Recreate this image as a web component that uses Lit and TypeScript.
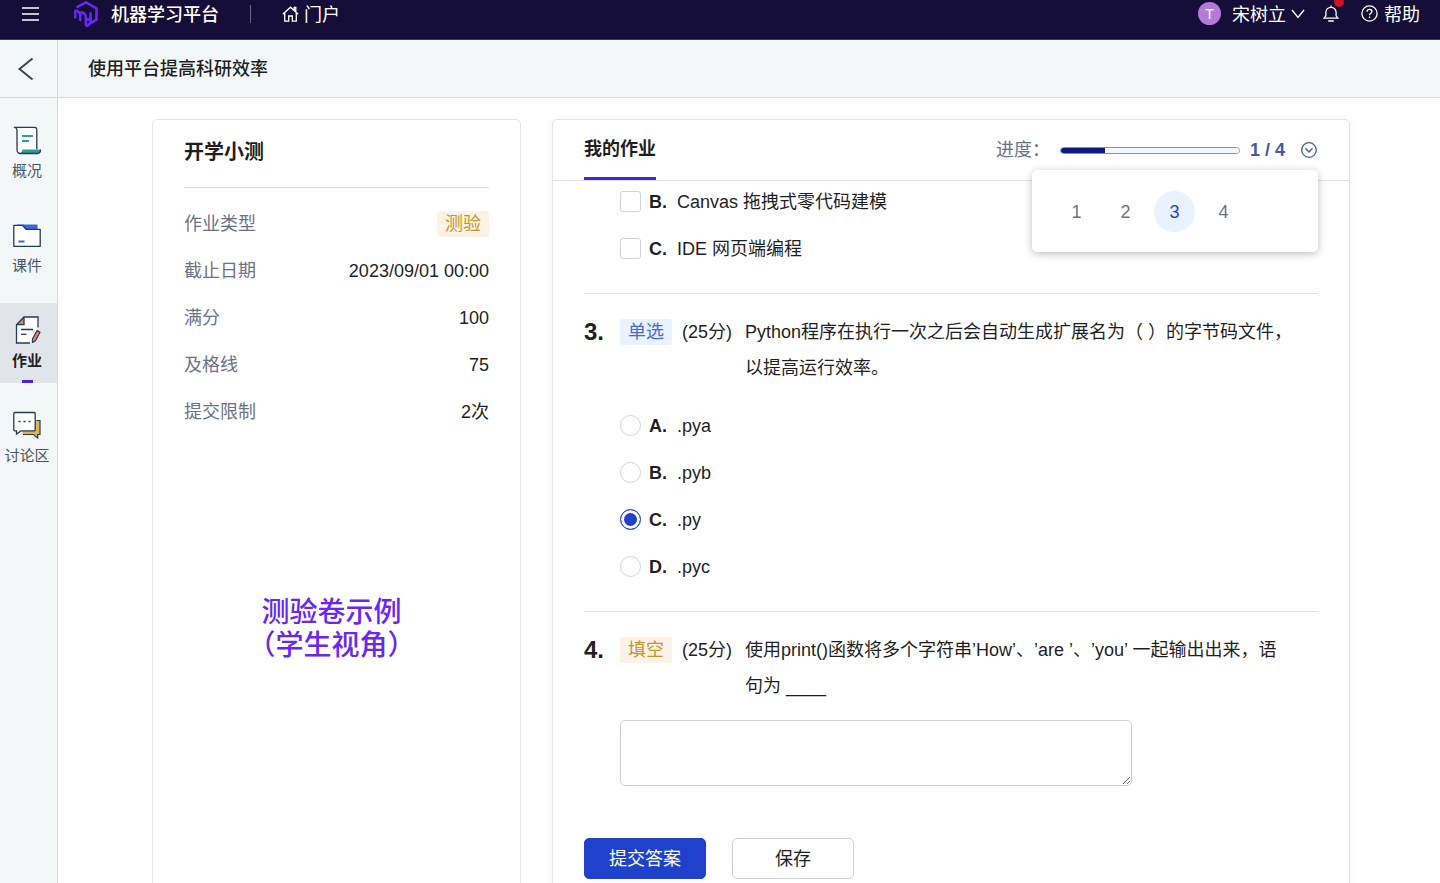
import { LitElement, html, css, svg } from "lit";
import { customElement, property, state } from "lit/decorators.js";
import { classMap } from "lit/directives/class-map.js";

const base = css`
  :host {
    display: block;
    font-family: "Liberation Sans", "Noto Sans CJK SC", sans-serif;
    font-size: 18px;
    line-height: 26px;
    color: #1f1f1f;
  }
  *,
  *::before,
  *::after {
    box-sizing: border-box;
  }
  button {
    font: inherit;
    color: inherit;
    background: none;
    border: 0;
    padding: 0;
    cursor: pointer;
  }
  a {
    color: inherit;
    text-decoration: none;
  }
  h1,
  h2,
  p,
  dl,
  dd {
    margin: 0;
    padding: 0;
  }
  svg {
    display: block;
    flex: none;
  }
`;

@customElement("top-bar")
export class TopBar extends LitElement {
  static styles = [
    base,
    css`
      .bar {
        display: flex;
        align-items: center;
        justify-content: space-between;
        height: 40px;
        padding: 0 20px 12px 22px;
        background: #140e38;
        border-bottom: 1px solid #3f3a5c;
        color: #fff;
      }
      .side,
      .item {
        display: flex;
        align-items: center;
      }
      .text {
        padding-top: 2px;
      }
      .brand {
        gap: 12px;
        margin-left: 34px;
        font-weight: 500;
      }
      .sep {
        width: 1px;
        height: 18px;
        margin: 0 31px;
        background: #6a667f;
      }
      .home,
      .user {
        gap: 5px;
      }
      .avatar {
        width: 23px;
        height: 23px;
        margin-right: 6px;
        border-radius: 50%;
        background: #b37bd9;
        font-size: 14px;
        line-height: 24px;
        text-align: center;
      }
      .bell {
        position: relative;
        margin: 0 22px 0 18px;
      }
      .dot {
        position: absolute;
        top: -8px;
        right: -5px;
        width: 10px;
        height: 10px;
        border-radius: 50%;
        background: #cf1322;
      }
      .help {
        gap: 6px;
      }
    `,
  ];

  render() {
    return html`
      <header class="bar">
        <div class="side">
          <button aria-label="菜单">
            <svg width="17" height="16" viewBox="0 0 17 16" stroke="#fff" stroke-width="1.7">
              <path d="M0 2h17M0 8h17M0 14h17" />
            </svg>
          </button>
          <a class="item brand" href="#">
            <svg width="26" height="28" viewBox="0 0 26 28" fill="none" stroke="#6a26f5" stroke-width="2.6" stroke-linecap="round" stroke-linejoin="round">
              <path d="M4.500 6.800 13 2.300l10.500 6v11.300l-5.300 3.200" />
              <path d="M2.200 17.500v-5.800c0-1 .9-1.300 1.800-.8 2 1.100 3.300 2.200 3.300 4.200v5" />
              <path d="M7.300 14.500c0-2 1.200-2.700 2.900-1.700 1.800 1 2.700 2.200 2.700 4.200v7.300c0 1.400.8 1.800 2 1.100 1.900-1.100 2.600-2 2.600-4.100v-8" />
              <path d="M12.900 18.800c2.400 1.400 4.300.7 4.600-1.500" />
            </svg>
            <span class="text">机器学习平台</span>
          </a>
          <span class="sep"></span>
          <a class="item home" href="#">
            <svg width="17" height="16" viewBox="0 0 17 16" fill="none" stroke="#fff" stroke-width="1.3">
              <path d="M.8 8.300 8.500 1.200l7.700 7.100M2.700 7v8.200h4V10h3.600v5.200h4V7M12.200 4.200V1.500h1.600v4.200" />
            </svg>
            <span class="text">门户</span>
          </a>
        </div>
        <div class="side">
          <button class="item user">
            <span class="avatar">T</span>
            <span class="text">宋树立</span>
            <svg width="14" height="10" viewBox="0 0 14 10" fill="none" stroke="#fff" stroke-width="1.4">
              <path d="M1 1l6 7.500L13 1" />
            </svg>
          </button>
          <button class="bell" aria-label="通知">
            <svg width="16" height="17" viewBox="0 0 16 17" fill="none" stroke="#fff" stroke-width="1.300">
              <path d="M1 13.200h14l-1.900-2.400V7.500C13.100 4.500 10.900 2.300 8 2.300S2.900 4.500 2.900 7.500v3.300zM8 .5v1.800M5.200 16h5.600" />
            </svg>
            <span class="dot"></span>
          </button>
          <a class="item help" href="#">
            <svg width="17" height="17" viewBox="0 0 17 17" fill="none" stroke="#fff" stroke-width="1.300">
              <circle cx="8.500" cy="8.500" r="7.600" />
              <path d="M6 6.800c0-1.500 1.100-2.400 2.500-2.400s2.500.9 2.500 2.200c0 1.700-2.500 1.700-2.500 3.700M8.500 11.400v1.500" />
            </svg>
            <span class="text">帮助</span>
          </a>
        </div>
      </header>
    `;
  }
}

const navIcons = {
  overview: svg`
    <path d="M2.500 1.500h19c1.600 0 2.200.9 2.200 2.500v20H9c-1 3-4.300 3-4.300 0V5C4.700 3 4 1.500 2.500 1.500z" fill="#fff" />
    <path d="M9.500 23.500h18c-.5 2.500-1.500 4-3.500 4H6.500c1.500-.5 2.500-2 3-4z" fill="#2f9e8f" />
    <path d="M.8 1.300h20.700c1.600 0 2.300 1 2.300 2.500v19.500M2 1.300c1.500.4 2 1.500 2 3V23c0 3 1 4.500 3 4.500h17c2 0 3.500-1.500 3.700-4" stroke="#1f3b5e" stroke-width="1.300" />
    <path d="M9 10h11M9 15h7" stroke="#2f9e8f" stroke-width="2" />`,
  files: svg`
    <path d="M4 3.500h20.500V9H10z" fill="#3668d6" />
    <path d="M.8 4.300h8.700l3.500 4h14.200v17H.8z" fill="#fff" stroke="#1f3b5e" stroke-width="1.300" stroke-linejoin="round" />
    <path d="M5.500 20.500h6" stroke="#3668d6" stroke-width="2" />`,
  homework: svg`
    <path d="M11 1h14v11l-7 15H3.500V9z" fill="#fff" />
    <path d="M3.500 8.700 11 1v7.700z" fill="#f08055" />
    <path d="M25 11.500V1H11L3.500 8.700V27H17M3.500 8.700H11V1M8 13.500h12" stroke="#1f3b5e" stroke-width="1.300" />
    <path d="M8 18.300h5.500" stroke="#1f3b5e" stroke-width="1.300" />
    <path d="M24 14.500 19.500 23v3.500l3-1.800 4.500-8.500z" fill="#f08055" stroke="#1f3b5e" stroke-width="1.200" stroke-linejoin="round" />`,
  forum: svg`
    <path d="M22 9.500h5v14h-2V27l-4-3.500H9.500V20H22z" fill="#e0b548" />
    <path d="M23.500 9.500H27v14h-2.300V27L20.500 23.500H10" stroke="#1f3b5e" stroke-width="1.200" />
    <path d="M2 1.500h19c.8 0 1.200.4 1.200 1.200v16c0 .8-.4 1.200-1.200 1.200H8L3.500 23v-3.100H2c-.8 0-1.200-.4-1.200-1.200v-16C.8 1.900 1.200 1.500 2 1.500z" fill="#fff" stroke="#1f3b5e" stroke-width="1.300" />
    <path d="M5.500 10.500h2M10.500 10.500h2M15.500 10.500h2" stroke="#1f3b5e" stroke-width="1.700" />`,
};

@customElement("side-nav")
export class SideNav extends LitElement {
  static styles = [
    base,
    css`
      .nav {
        display: flex;
        flex-direction: column;
        gap: 15px;
        padding: 15px 0 0;
      }
      .entry {
        display: flex;
        flex-direction: column;
        align-items: center;
        gap: 4px;
        height: 80px;
        padding: 13px 3px 0 0;
        color: #4b5563;
        font-size: 15px;
        line-height: 24px;
      }
      .entry.on {
        background: #e1e4e9;
        color: #1f1f1f;
        font-weight: 700;
      }
      .entry.on::after {
        content: "";
        width: 11px;
        height: 3px;
        margin-top: 3px;
        background: #4a1fe0;
        flex: none;
      }
      .label {
        flex: none;
      }
    `,
  ];

  @property() current = "作业";

  private entries = [
    { label: "概况", icon: navIcons.overview },
    { label: "课件", icon: navIcons.files },
    { label: "作业", icon: navIcons.homework },
    { label: "讨论区", icon: navIcons.forum },
  ];

  render() {
    return html`
      <nav class="nav">
        ${this.entries.map(
          (e) => html`
            <a href="#" class=${classMap({ entry: true, on: e.label === this.current })}>
              <svg width="28" height="29" viewBox="0 0 28 29" fill="none">${e.icon}</svg>
              <span class="label">${e.label}</span>
            </a>
          `
        )}
      </nav>
    `;
  }
}

@customElement("quiz-info")
export class QuizInfo extends LitElement {
  static styles = [
    base,
    css`
      :host {
        border: 1px solid #e1e4e8;
        border-radius: 5px;
        padding: 0 31px;
        background: #fff;
      }
      .title {
        padding: 17px 0 19px;
        border-bottom: 1px solid #dcdfe3;
        font-size: 20px;
        line-height: 31px;
        font-weight: 700;
      }
      .rows {
        padding-top: 12px;
      }
      .row {
        display: flex;
        align-items: center;
        justify-content: space-between;
        height: 47px;
      }
      .key {
        color: #6b7287;
      }
      .tag {
        padding: 0 8px;
        border-radius: 3px;
        background: #fef1e6;
        color: #c0982a;
      }
      .note {
        width: max-content;
        max-width: 100%;
        margin: 161px auto 0;
        padding-right: 10px;
        color: #6a26f5;
        font-size: 28px;
        line-height: 33px;
        font-weight: 500;
        text-align: center;
      }
    `,
  ];

  private rows = [
    { key: "作业类型", value: "测验", tag: true },
    { key: "截止日期", value: "2023/09/01 00:00" },
    { key: "满分", value: "100" },
    { key: "及格线", value: "75" },
    { key: "提交限制", value: "2次" },
  ];

  render() {
    return html`
      <h2 class="title">开学小测</h2>
      <dl class="rows">
        ${this.rows.map(
          (r) => html`
            <div class="row">
              <dt class="key">${r.key}</dt>
              <dd class=${classMap({ tag: !!r.tag })}>${r.value}</dd>
            </div>
          `
        )}
      </dl>
      <p class="note">测验卷示例<br />（学生视角）</p>
    `;
  }
}

@customElement("quiz-paper")
export class QuizPaper extends LitElement {
  static styles = [
    base,
    css`
      :host {
        border: 1px solid #e1e4e8;
        border-radius: 5px;
        background: #fff;
        box-shadow: 0 0 8px rgba(0, 0, 0, 0.05);
      }
      .head {
        display: flex;
        justify-content: space-between;
        height: 61px;
        padding: 0 31px;
        border-bottom: 1px solid #dfe2e8;
      }
      .tab {
        height: 60px;
        border-bottom: 3px solid #4a1fe0;
        font-weight: 700;
      }
      .progress {
        position: relative;
        display: flex;
        align-items: center;
        color: #6b7287;
      }
      .meter {
        appearance: none;
        width: 180px;
        height: 7px;
        margin: 0 10px;
        border: 1px solid #6b94ea;
        border-radius: 4px;
        background: #f3f7ff;
        overflow: hidden;
      }
      .meter::-webkit-progress-bar {
        background: #f3f7ff;
      }
      .meter::-webkit-progress-value {
        background: #0a1a82;
      }
      .count {
        color: #4659a0;
        font-weight: 700;
      }
      .toggle {
        margin-left: 15px;
      }
      .pop {
        position: absolute;
        top: 50px;
        right: 0;
        display: flex;
        gap: 8px;
        width: 286px;
        padding: 21px 24px 20px;
        border-radius: 5px;
        background: #fff;
        box-shadow: 0 2px 8px rgba(0, 0, 0, 0.25);
      }
      .num {
        width: 41px;
        height: 41px;
        border-radius: 50%;
      }
      .num.on {
        background: #e9f2ff;
        color: #1d3fd0;
      }
      .question {
        margin: 0 31px;
        padding: 20px 0 21px;
        border-bottom: 1px solid #dfe3e3;
      }
      .question.cut {
        margin-top: -3px;
        padding-top: 0;
      }
      .question.last {
        border-bottom: 0;
        padding-bottom: 0;
      }
      .stem {
        display: grid;
        grid-template-columns: 36px auto auto 1fr;
        padding: 0 16px 16px 0;
        line-height: 36px;
      }
      .no {
        font-size: 24px;
        font-weight: 700;
      }
      .tag {
        height: 26px;
        margin: 5px 10px 0 0;
        padding: 0 8px;
        border-radius: 3px;
        background: #e9f2ff;
        color: #4a68d8;
        line-height: 26px;
      }
      .tag.fill {
        background: #fef1e6;
        color: #c0982a;
      }
      .score {
        width: 63px;
      }
      .body {
        text-spacing-trim: space-all;
      }
      .option {
        display: flex;
        align-items: center;
        height: 47px;
        margin-left: 36px;
      }
      .option b {
        width: 28px;
      }
      .box {
        appearance: none;
        flex: none;
        width: 21px;
        height: 21px;
        margin: 0 8px 0 0;
        border: 1px solid #d0d3de;
        border-radius: 3px;
        background: #fff;
      }
      .box.round {
        border-radius: 50%;
      }
      .box:checked {
        border-color: #1f41cc;
        background: #1f41cc;
        box-shadow: inset 0 0 0 3px #fff;
      }
      .answer {
        display: block;
        width: 70%;
        max-width: 512px;
        height: 66px;
        margin-left: 36px;
        border: 1px solid #d0d3de;
        border-radius: 5px;
        font: inherit;
        resize: both;
      }
      .actions {
        display: flex;
        gap: 26px;
        padding: 52px 31px 40px;
      }
      .action {
        width: 122px;
        height: 41px;
        border: 1px solid #d0d3de;
        border-radius: 5px;
      }
      .action.primary {
        border-color: #1f41cc;
        background: #1f41cc;
        color: #fff;
      }
    `,
  ];

  @state() private current = 3;
  @state() private open = true;
  @state() private choice = "C";

  private option(kind: "checkbox" | "radio", group: string, letter: string, text: string) {
    return html`
      <label class="option">
        <input
          class=${classMap({ box: true, round: kind === "radio" })}
          type=${kind}
          name=${group}
          .checked=${kind === "radio" && letter === this.choice}
          @change=${() => {
            if (kind === "radio") this.choice = letter;
          }}
        />
        <b>${letter}.</b>
        <span>${text}</span>
      </label>
    `;
  }

  render() {
    return html`
      <div class="head">
        <button class="tab">我的作业</button>
        <div class="progress">
          <label for="meter">进度：</label>
          <progress id="meter" class="meter" value="1" max="4"></progress>
          <span class="count">1 / 4</span>
          <button class="toggle" aria-label="题目列表" @click=${() => (this.open = !this.open)}>
            <svg width="18" height="18" viewBox="0 0 18 18" fill="none" stroke="#4659a0" stroke-width="1.300">
              <circle cx="9" cy="9" r="7.300" />
              <path d="M5.500 7.300 9 11l3.500-3.700" />
            </svg>
          </button>
          ${this.open
            ? html`<div class="pop">
                ${[1, 2, 3, 4].map(
                  (n) => html`<button
                    class=${classMap({ num: true, on: n === this.current })}
                    @click=${() => (this.current = n)}
                  >
                    ${n}
                  </button>`
                )}
              </div>`
            : null}
        </div>
      </div>

      <section class="question cut">
        ${this.option("checkbox", "q2", "B", "Canvas 拖拽式零代码建模")}
        ${this.option("checkbox", "q2", "C", "IDE 网页端编程")}
      </section>

      <section class="question">
        <div class="stem">
          <span class="no">3.</span>
          <span class="tag">单选</span>
          <span class="score">(25分)</span>
          <p class="body">Python程序在执行一次之后会自动生成扩展名为（ ）的字节码文件，以提高运行效率。</p>
        </div>
        ${this.option("radio", "q3", "A", ".pya")} ${this.option("radio", "q3", "B", ".pyb")}
        ${this.option("radio", "q3", "C", ".py")} ${this.option("radio", "q3", "D", ".pyc")}
      </section>

      <section class="question last">
        <div class="stem">
          <span class="no">4.</span>
          <span class="tag fill">填空</span>
          <span class="score">(25分)</span>
          <p class="body" id="q4">使用print()函数将多个字符串’How’、’are ’、’you’ 一起输出出来，语<br />句为 ____</p>
        </div>
        <textarea class="answer" aria-labelledby="q4"></textarea>
      </section>

      <div class="actions">
        <button class="action primary">提交答案</button>
        <button class="action">保存</button>
      </div>
    `;
  }
}

@customElement("app-root")
export class AppRoot extends LitElement {
  static styles = [
    base,
    css`
      :host {
        display: flex;
        flex-direction: column;
        height: 100vh;
        overflow: hidden;
        background: #fff;
      }
      .page {
        flex: 1;
        min-height: 0;
        display: grid;
        grid-template-columns: 58px 1fr;
        grid-template-rows: 58px 1fr;
      }
      .back,
      .heading {
        display: flex;
        align-items: center;
        background: #f4f7f8;
        border-bottom: 1px solid #d6d9df;
      }
      .back {
        padding-left: 17px;
        border-right: 1px solid #d6d9df;
      }
      .heading {
        padding-left: 30px;
      }
      .crumb {
        font-size: 18px;
        font-weight: 500;
      }
      .rail {
        background: #f4f7f8;
        border-right: 1px solid #d6d9df;
      }
      .main {
        display: grid;
        grid-template-columns: 369fr 798fr;
        gap: 31px;
        align-items: stretch;
        padding: 21px 90px 0 94px;
        overflow: auto;
        scrollbar-width: none;
      }
    `,
  ];

  render() {
    return html`
      <top-bar></top-bar>
      <div class="page">
        <div class="back">
          <button aria-label="返回">
            <svg width="18" height="24" viewBox="0 0 18 24" fill="none" stroke="#3d4450" stroke-width="2">
              <path d="M15.500 1.500 2.500 12l13 10.500" />
            </svg>
          </button>
        </div>
        <div class="heading"><h1 class="crumb">使用平台提高科研效率</h1></div>
        <div class="rail"><side-nav></side-nav></div>
        <main class="main">
          <quiz-info></quiz-info>
          <quiz-paper></quiz-paper>
        </main>
      </div>
    `;
  }
}
